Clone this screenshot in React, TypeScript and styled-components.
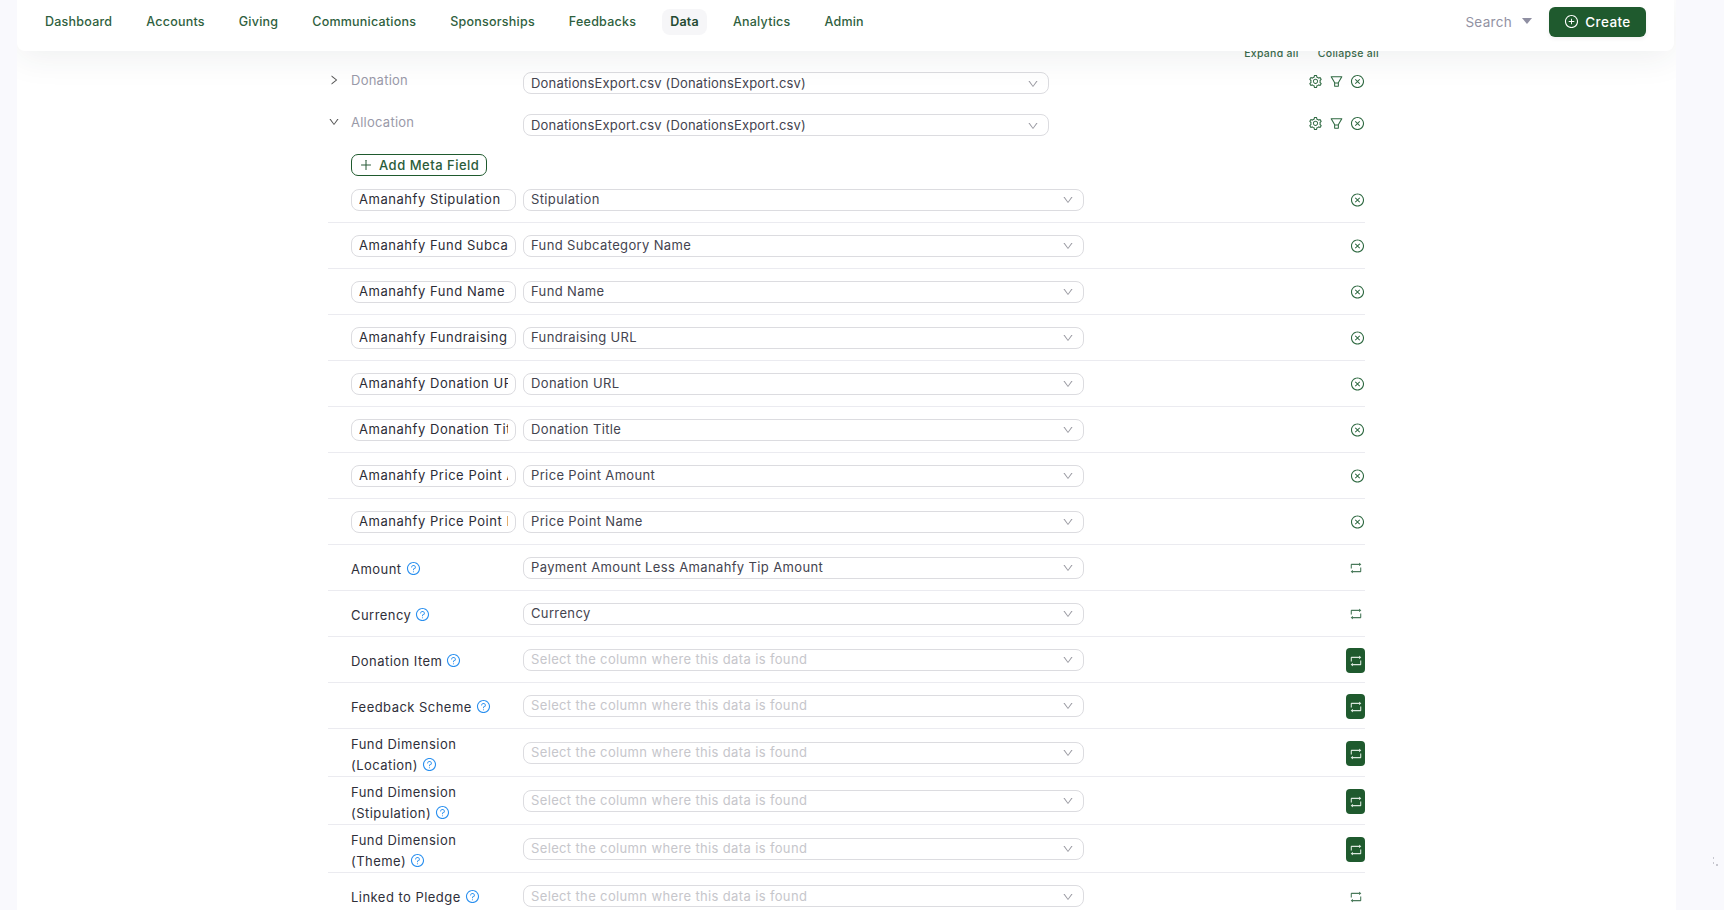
import React from "react";
import styled, { createGlobalStyle } from "styled-components";
import {
  AiOutlineCloseCircle,
  AiOutlineDown,
  AiOutlineFilter,
  AiOutlinePlus,
  AiOutlinePlusCircle,
  AiOutlineQuestionCircle,
  AiOutlineRetweet,
  AiOutlineRight,
  AiOutlineSetting,
} from "react-icons/ai";

const GREEN = "#1f5a2e";
const Global = createGlobalStyle`
  html, body { margin: 0; padding: 0; height: 100%; overflow: hidden; background: #f9f9fd; }
  body { font-family: Inter, "Open Sans", sans-serif; }
  * { box-sizing: border-box; }
`;
const Frame = styled.div`
  position: relative; width: 1724px; height: 910px; overflow: hidden; padding: 0 48px 0 17px;
`;
const Sheet = styled.div`
  width: 1659px; height: 910px; background: #fff; overflow: hidden;
`;
const Header = styled.header`
  position: relative; z-index: 2; height: 51px; background: #fff; border-radius: 0 0 8px 8px; width: 1657px;
  box-shadow: 0 6px 34px rgba(40, 50, 70, 0.08);
  display: flex; align-items: center; padding: 0 28px 7px 20px;
`;
const Nav = styled.nav`
  display: flex; align-items: center; gap: 18px; flex: 1;
`;
const NavItem = styled.a<{ $active?: boolean }>`
  padding: 0 8px; height: 26px; line-height: 26px; border-radius: 8px; font-size: 12.5px; letter-spacing: 0.23px;
  font-weight: ${(p) => (p.$active ? 600 : 500)}; color: ${(p) => (p.$active ? "#244a32" : "#2f5f3e")};
  background: ${(p) => (p.$active ? "#f6f6f8" : "transparent")};
`;
const Search = styled.div`
  display: flex; align-items: center; gap: 10px; margin-right: 17px; color: #9292a3; font-size: 13.5px; letter-spacing: 0.3px;
`;
const Caret = styled.span`
  width: 0; height: 0; border-left: 5px solid transparent; border-right: 5px solid transparent; border-top: 6px solid #8f8fa2; margin-top: -2px;
`;
const CreateButton = styled.button`
  width: 97px; height: 30px; border: 0; border-radius: 6px; background: ${GREEN}; color: #fff; font: 500 13.5px Inter, sans-serif; letter-spacing: 0.4px;
  display: flex; align-items: center; justify-content: center; gap: 6px; padding: 0;
  box-shadow: 0 2px 4px rgba(0, 0, 0, 0.06);
  svg { margin-top: -1px; }
`;
const Content = styled.main`
  width: 1037px; margin: -7px 0 0 311px;
`;
const ExpandBar = styled.div`
  height: 19px; margin-right: -14px; display: flex; justify-content: flex-end; gap: 19px; padding-top: 2px;
  font-size: 10.5px; line-height: 15px; letter-spacing: 0.3px; color: #3b6b4b; font-weight: 500;
`;
const SourceRow = styled.div`
  height: 42px; display: flex; align-items: center; gap: 0;
`;
const Toggle = styled.span`
  width: 23px; height: 22px; display: flex; align-items: center; color: #555; margin-top: -8px;
`;
const SourceLabel = styled.span`
  width: 172px; font-size: 13px; color: #9a9aa9; margin-top: -8px; letter-spacing: 0.25px;
`;
const Select = styled.div<{ $width: number; $placeholder?: boolean; $source?: boolean }>`
  width: ${(p) => p.$width}px; height: 22px; border: 1px solid #dcdce0; border-bottom-width: 1.5px; border-radius: 8px; padding: 0 9px 1px 7px;
  margin-top: ${(p) => (p.$source ? -2 : 0)}px;
  display: flex; align-items: center; justify-content: space-between; font-size: 13px; letter-spacing: ${(p) => (p.$source ? 0.18 : 0.36)}px;
  color: ${(p) => (p.$placeholder ? "#c6c6cb" : "#44444f")}; flex: none;
  svg { color: #9b9ba3; margin-top: 2px; }
`;
const Actions = styled.div`
  margin-left: auto; display: flex; align-items: center; gap: 6px; color: #2f6a42; margin-top: -6px;
`;
const AddWrap = styled.div`
  padding: 7px 0 0 23px; height: 30px;
`;
const AddButton = styled.button`
  width: 136px; height: 22px; border: 1px solid ${GREEN}; border-radius: 7px; background: #fff; color: #2b5c3a; padding: 0 0 0 7px;
  font: 500 13px Inter, sans-serif; letter-spacing: 0.5px; display: flex; align-items: center; gap: 6px;
`;
const FieldRow = styled.div<{ $tall?: boolean }>`
  height: ${(p) => (p.$tall ? 48 : 46)}px; border-bottom: 1px solid #ebebf0; padding-left: 23px; display: flex; align-items: center;
  &:last-child { border-bottom: 0; }
`;
const MetaInput = styled.input`
  width: 165px; height: 22px; margin-right: 7px; border: 1px solid #dcdce0; border-radius: 8px; padding: 0 7px 1px 7px; outline: 0;
  font: 400 13px Inter, sans-serif; letter-spacing: 0.54px; color: #2c2c36; background: #fff; flex: none;
`;
const Label = styled.div<{ $tall?: boolean }>`
  width: 172px; flex: none; font-size: 13px; line-height: 21px; letter-spacing: 0.46px; color: #2f2f3a;
  padding: ${(p) => (p.$tall ? 5 : 3)}px 20px 0 0;
`;
const Help = styled.span`
  display: inline-flex; vertical-align: -2px; margin-left: 4px; color: #2b90ef;
`;
const SwapButton = styled.span<{ $on?: boolean }>`
  margin: ${(p) => (p.$on ? 2 : 1)}px 0 0 auto; width: 19px; height: 25px; border-radius: 4px; flex: none; display: flex; align-items: center; justify-content: center;
  background: ${(p) => (p.$on ? GREEN : "transparent")}; color: ${(p) => (p.$on ? "#dbe7de" : "#4a7a5b")};
`;
const CloseSlot = styled.span`
  margin-left: auto; width: 15px; display: flex; color: #2f6a42; transform: translateY(0.5px);
`;
const Specks = styled.svg`
  position: absolute; right: 5px; top: 857px;
`;

const nav = ["Dashboard", "Accounts", "Giving", "Communications", "Sponsorships", "Feedbacks", "Data", "Analytics", "Admin"];
const meta = [
  ["Amanahfy Stipulation", "Stipulation"],
  ["Amanahfy Fund Subcategory Name", "Fund Subcategory Name"],
  ["Amanahfy Fund Name", "Fund Name"],
  ["Amanahfy Fundraising URL", "Fundraising URL"],
  ["Amanahfy Donation URL", "Donation URL"],
  ["Amanahfy Donation Title", "Donation Title"],
  ["Amanahfy Price Point Amount", "Price Point Amount"],
  ["Amanahfy Price Point Name", "Price Point Name"],
];
const PLACEHOLDER = "Select the column where this data is found";
const fields: { label: string; value?: string; on?: boolean; tall?: boolean }[] = [
  { label: "Amount", value: "Payment Amount Less Amanahfy Tip Amount" },
  { label: "Currency", value: "Currency" },
  { label: "Donation Item", on: true },
  { label: "Feedback Scheme", on: true },
  { label: "Fund Dimension (Location)", on: true, tall: true },
  { label: "Fund Dimension (Stipulation)", on: true, tall: true },
  { label: "Fund Dimension (Theme)", on: true, tall: true },
  { label: "Linked to Pledge" },
];

const Source = ({ name, open }: { name: string; open?: boolean }) => (
  <SourceRow>
    <Toggle>{open ? <AiOutlineDown size={12} /> : <AiOutlineRight size={12} />}</Toggle>
    <SourceLabel>{name}</SourceLabel>
    <Select $width={526} $source>
      DonationsExport.csv (DonationsExport.csv)
      <AiOutlineDown size={12} />
    </Select>
    <Actions>
      <AiOutlineSetting size={15} />
      <AiOutlineFilter size={15} />
      <AiOutlineCloseCircle size={15} />
    </Actions>
  </SourceRow>
);

export default function App() {
  return (
    <Frame>
      <Global />
      <Sheet>
        <Header>
          <Nav>
            {nav.map((n) => (
              <NavItem key={n} $active={n === "Data"}>{n}</NavItem>
            ))}
          </Nav>
          <Search>Search<Caret /></Search>
          <CreateButton><AiOutlinePlusCircle size={15} />Create</CreateButton>
        </Header>
        <Content>
          <ExpandBar><span>Expand all</span><span>Collapse all</span></ExpandBar>
          <Source name="Donation" />
          <Source name="Allocation" open />
          <AddWrap>
            <AddButton><AiOutlinePlus size={14} />Add Meta Field</AddButton>
          </AddWrap>
          {meta.map(([name, value]) => (
            <FieldRow key={name}>
              <MetaInput readOnly value={name} />
              <Select $width={561}>{value}<AiOutlineDown size={12} /></Select>
              <CloseSlot><AiOutlineCloseCircle size={15} /></CloseSlot>
            </FieldRow>
          ))}
          {fields.map((f) => (
            <FieldRow key={f.label} $tall={f.tall}>
              <Label $tall={f.tall}>
                {f.label}
                <Help><AiOutlineQuestionCircle size={15} /></Help>
              </Label>
              <Select $width={561} $placeholder={!f.value}>
                {f.value ?? PLACEHOLDER}
                <AiOutlineDown size={12} />
              </Select>
              <SwapButton $on={f.on}><AiOutlineRetweet size={14} /></SwapButton>
            </FieldRow>
          ))}
        </Content>
      </Sheet>
      <Specks width="6" height="10" viewBox="0 0 6 10" fill="#c8c8d0">
        <rect x="0" y="0" width="1" height="2" />
        <rect x="0" y="5" width="1" height="2" />
        <rect x="3" y="7" width="2" height="2" />
      </Specks>
    </Frame>
  );
}
